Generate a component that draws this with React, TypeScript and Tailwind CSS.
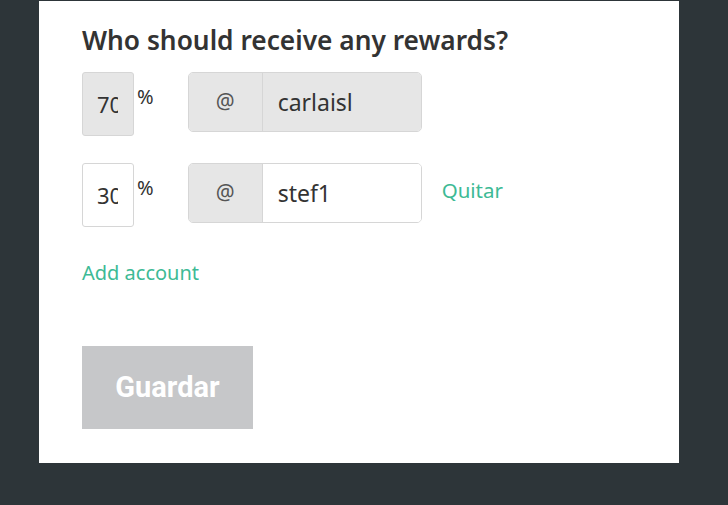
import React from "react";

interface IRewardRow {
  percent: string;
  account: string;
  locked: boolean;
}

const rows: IRewardRow[] = [
  { percent: "70", account: "carlaisl", locked: true },
  { percent: "30", account: "stef1", locked: false },
];

const RewardRow: React.FC<{ row: IRewardRow }> = ({ row }) => {
  return (
    <div className="flex items-start">
      <div
        className={`h-[64px] w-[52px] rounded-[3px] border border-[#d6d6d6] overflow-hidden flex items-center pl-[14px] ${
          row.locked ? "bg-[#e6e6e6]" : "bg-white"
        }`}
      >
        <span className="block w-[21px] overflow-hidden whitespace-nowrap text-[22px] text-[#333]">
          {row.percent}
        </span>
      </div>
      <span className="ml-[3px] mt-[15px] text-[20px] leading-none text-[#333]">%</span>
      <div className="ml-[34px] flex h-[60px] w-[234px] rounded-[5px] border border-[#d6d6d6] overflow-hidden">
        <div className="w-[74px] flex items-center justify-center bg-[#e6e6e6] border-r border-[#d6d6d6] text-[21px] text-[#555]">
          @
        </div>
        <div
          className={`flex-1 flex items-center pl-[15px] text-[23px] text-[#333] ${
            row.locked ? "bg-[#e6e6e6]" : "bg-white"
          }`}
        >
          {row.account}
        </div>
      </div>
      {!row.locked && (
        <a href="#" className="ml-[20px] mt-[12px] text-[20.5px] text-[#3dba95]">
          Quitar
        </a>
      )}
    </div>
  );
};

const App: React.FC = () => {
  return (
    <div className="min-h-[505px] w-full bg-[#2d3539] pt-[1px] font-['Noto_Sans',sans-serif]">
      <div className="ml-[39px] w-[640px] h-[462px] bg-white pl-[43px] pt-[19px]">
        <h2 className="text-[26.3px] font-semibold text-[#333] leading-[40px]">
          Who should receive any rewards?
        </h2>
        <div className="mt-[12px] space-y-[27px]">
          {rows.map((row: IRewardRow, _idx: number) => (
            <RewardRow key={_idx} row={row} />
          ))}
        </div>
        <a href="#" className="block mt-[32px] text-[20px] text-[#3dba95] leading-[28px]">
          Add account
        </a>
        <button className="mt-[59px] w-[171px] h-[83px] bg-[#c6c7c9] text-white text-[29px] font-bold font-['Roboto',sans-serif]">
          Guardar
        </button>
      </div>
    </div>
  );
};

export default App;
